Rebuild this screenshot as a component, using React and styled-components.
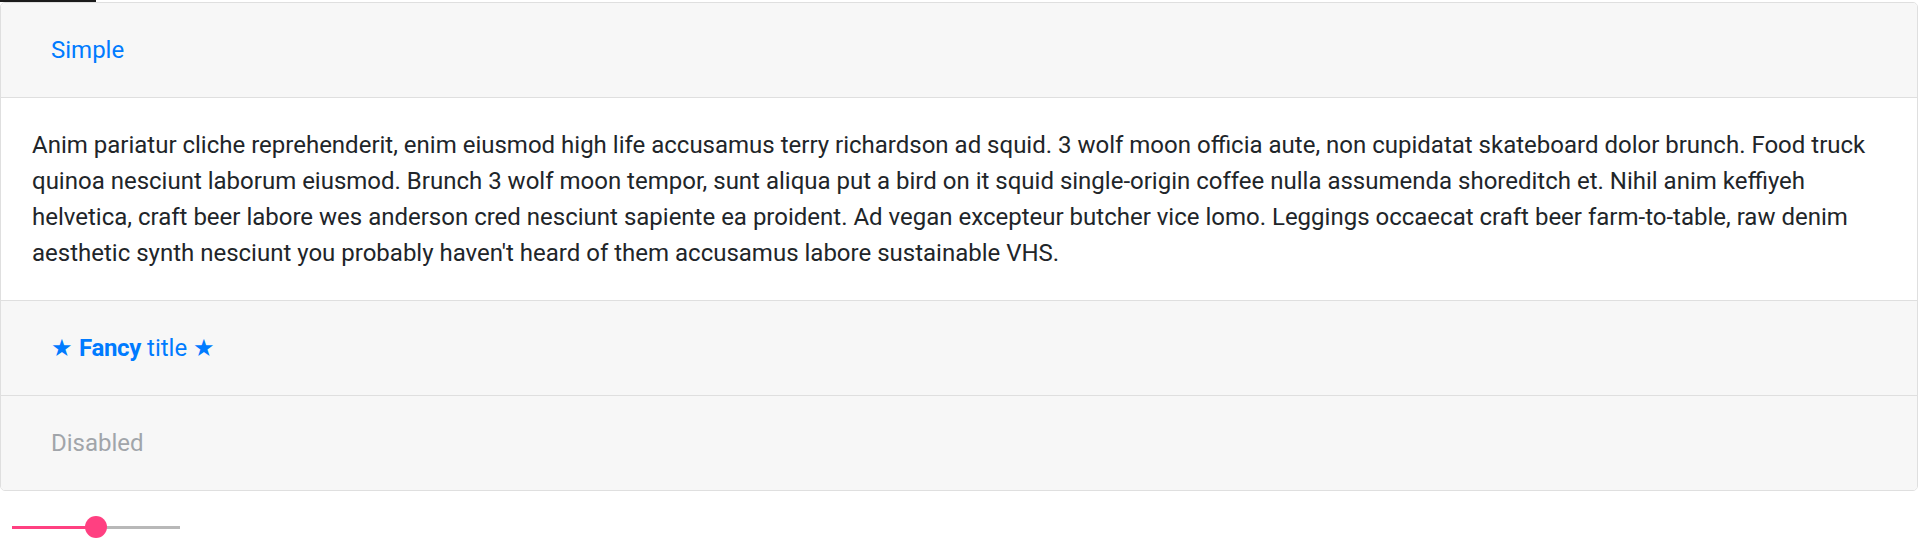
import React from 'react'
import styled, { createGlobalStyle } from 'styled-components'

const GlobalStyle = createGlobalStyle`
    body {
        margin: 0;
        background: #fff;
        font-family: Roboto, "Liberation Sans", sans-serif;
        color: #212529;
    }
`

const TopBar = styled.div`
    width: 96px;
    height: 2px;
    background: #1b1b1b;
`

const Card = styled.div`
    border: 1px solid #dfdfdf;
    border-radius: 5px;
    overflow: hidden;
    background: #fff;
`

const Header = styled.div`
    background: #f7f7f7;
    padding: 29px 50px;
    font-size: 24px;
    line-height: 36px;
    color: ${props => (props.disabled ? '#a1a5aa' : '#007bff')};
    border-top: ${props => (props.first ? 'none' : '1px solid #dfdfdf')};
    cursor: ${props => (props.disabled ? 'default' : 'pointer')};

    b {
        font-weight: 700;
        letter-spacing: -0.3px;
    }
`

const Body = styled.div`
    border-top: 1px solid #dfdfdf;
    padding: 29px 31px;
    font-size: 24px;
    line-height: 36px;
`

const SliderWrap = styled.div`
    margin: 25px 0 0 12px;
    width: 168px;
    height: 22px;
    position: relative;
    display: flex;
    align-items: center;
`

const Track = styled.div`
    flex: 1;
    height: 3px;
    background: #b8b8b8;
    display: flex;
`

const TrackFill = styled.div`
    height: 100%;
    background: #ff4081;
`

const Thumb = styled.div`
    position: absolute;
    top: 0;
    width: 22px;
    height: 22px;
    margin-left: -11px;
    border-radius: 50%;
    background: #ff4081;
`

const text = "Anim pariatur cliche reprehenderit, enim eiusmod high life accusamus terry richardson ad squid. 3 wolf moon officia aute, non cupidatat skateboard dolor brunch. Food truck quinoa nesciunt laborum eiusmod. Brunch 3 wolf moon tempor, sunt aliqua put a bird on it squid single-origin coffee nulla assumenda shoreditch et. Nihil anim keffiyeh helvetica, craft beer labore wes anderson cred nesciunt sapiente ea proident. Ad vegan excepteur butcher vice lomo. Leggings occaecat craft beer farm-to-table, raw denim aesthetic synth nesciunt you probably haven't heard of them accusamus labore sustainable VHS."

const App = () => {
    const value = 50

    return (
        <>
            <GlobalStyle />
            <TopBar />
            <Card>
                <Header first>Simple</Header>
                <Body>{text}</Body>
                <Header>★ <b>Fancy</b> title ★</Header>
                <Header disabled>Disabled</Header>
            </Card>
            <SliderWrap>
                <Track>
                    <TrackFill style={{ width: `${value}%` }} />
                </Track>
                <Thumb style={{ left: `${value}%` }} />
            </SliderWrap>
        </>
    )
}

export default App
